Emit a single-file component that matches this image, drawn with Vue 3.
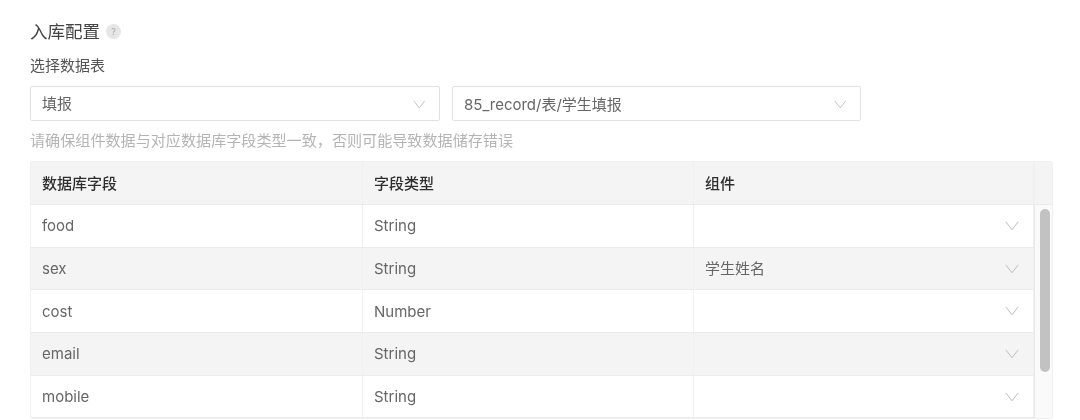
<template>
  <div class="page">
    <div class="title">
      <span class="title-text">入库配置</span>
      <span class="help">?</span>
    </div>
    <div class="label">选择数据表</div>
    <div class="selects">
      <div class="select">
        <span class="cjk">填报</span>
        <svg class="arrow" viewBox="0 0 14 10"><path d="M.8.8 7 8.8 13.2.8" /></svg>
      </div>
      <div class="select">
        <span>85_record/表/学生填报</span>
        <svg class="arrow" viewBox="0 0 14 10"><path d="M.8.8 7 8.8 13.2.8" /></svg>
      </div>
    </div>
    <div class="hint">请确保组件数据与对应数据库字段类型一致，否则可能导致数据储存错误</div>
    <div class="table">
      <div class="head">
        <div class="cell"><span class="cjk">数据库字段</span></div>
        <div class="cell"><span class="cjk">字段类型</span></div>
        <div class="cell"><span class="cjk">组件</span></div>
        <div class="gutter-head"></div>
      </div>
      <div class="body">
        <div class="rows">
          <div v-for="(row, i) in rows" :key="row.name" class="row" :class="{ striped: i % 2 === 1 }">
            <div class="cell">{{ row.name }}</div>
            <div class="cell">{{ row.type }}</div>
            <div class="cell comp">
              <span class="cjk">{{ row.comp }}</span>
              <svg class="arrow" width="14" height="10" viewBox="0 0 14 10"><path d="M.8.8 7 8.8 13.2.8" /></svg>
            </div>
          </div>
        </div>
        <div class="gutter">
          <div class="thumb"></div>
        </div>
      </div>
    </div>
  </div>
</template>

<script setup>
const rows = [
  { name: 'food', type: 'String', comp: '' },
  { name: 'sex', type: 'String', comp: '学生姓名' },
  { name: 'cost', type: 'Number', comp: '' },
  { name: 'email', type: 'String', comp: '' },
  { name: 'mobile', type: 'String', comp: '' }
]
</script>

<style scoped>
.page {
  width: 1080px;
  height: 420px;
  overflow: hidden;
  box-sizing: border-box;
  padding: 19px 27px 0 30px;
  background: #fff;
  font-family: Inter, "Noto Sans CJK SC", sans-serif;
  font-size: 15px;
  color: #666;
  filter: blur(0.35px);
}

.title {
  display: flex;
  align-items: center;
  gap: 6px;
  height: 24px;
  font-size: 17.5px;
  color: #444;
}

.title-text {
  padding-bottom: 2px;
}

.help {
  width: 15px;
  height: 15px;
  margin-top: 1px;
  border-radius: 50%;
  background: #e6e6e6;
  color: #aaa;
  font-size: 9px;
  line-height: 15px;
  text-align: center;
}

.cjk {
  padding-bottom: 2px;
}

.label {
  margin-top: 12px;
  height: 22px;
  line-height: 22px;
  color: #555;
}

.selects {
  display: flex;
  gap: 12px;
  margin-top: 8.5px;
}

.select {
  width: 410px;
  height: 35px;
  box-sizing: border-box;
  display: flex;
  align-items: center;
  justify-content: space-between;
  padding: 0 14px 0 11px;
  border: 1px solid #e2e2e2;
  border-radius: 2px;
}

.select + .select {
  width: 409px;
}

.select .arrow {
  width: 12.5px;
  height: 9px;
  margin-top: 2px;
}

.arrow {
  flex: none;
  fill: none;
  stroke: #bdbdbd;
  stroke-width: 1;
}

.hint {
  margin-top: 9px;
  height: 22px;
  line-height: 22px;
  font-size: 15.1px;
  color: #b4b4b4;
}

.table {
  margin-top: 9.5px;
  border: 1px solid #f0f0f0;
  border-radius: 2px;
}

.head {
  display: grid;
  grid-template-columns: 332px 331px 340px 1fr;
  height: 43px;
  box-sizing: border-box;
  background: #f4f4f4;
  border-bottom: 1px solid #ebebeb;
  color: #2e2e2e;
  font-weight: 500;
}

.gutter-head {
  border-left: 1px solid #f0f0f0;
}

.cell {
  display: flex;
  align-items: center;
  padding: 0 12px 0 11px;
  box-sizing: border-box;
  border-right: 1px solid #f0f0f0;
}

.body {
  display: flex;
}

.rows {
  width: 1003px;
  flex: none;
}

.row {
  display: grid;
  grid-template-columns: 332px 331px 340px;
  height: 42.7px;
  box-sizing: border-box;
  border-bottom: 1px solid #ebebeb;
}

.row.striped {
  background: #f4f4f4;
}

.comp {
  justify-content: space-between;
  padding-right: 14px;
}

.gutter {
  flex: 1;
  padding: 4px 0 0 5px;
  border-left: 1px solid #e8e8e8;
  background: #fafafa;
}

.thumb {
  width: 10px;
  height: 163px;
  border-radius: 5px;
  background: #c2c2c2;
}
</style>

<style>
html, body {
  margin: 0;
  overflow: hidden;
}
</style>
